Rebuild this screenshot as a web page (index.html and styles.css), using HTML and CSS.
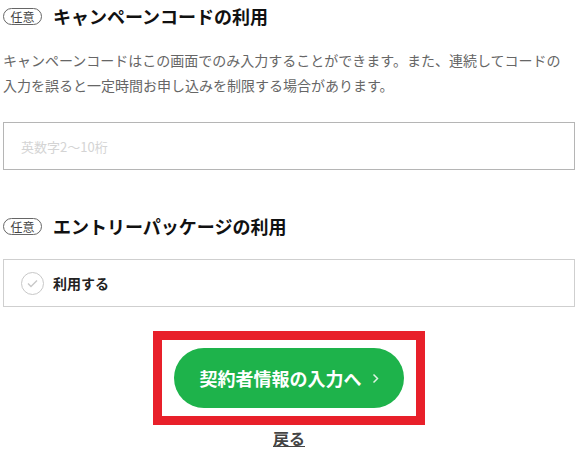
FILE: index.html
```html
<!DOCTYPE html>
<html lang="ja">

<head>
    <meta charset="UTF-8">
    <title>キャンペーンコードの利用</title>
    <meta name="viewport" content="width=device-width, initial-scale=1.0">
    <link rel="stylesheet" href="styles.css">
</head>

<body>

    <div class="section-head">
        <span class="badge">任意</span>
        <h2>キャンペーンコードの利用</h2>
    </div>

    <p class="note">キャンペーンコードはこの画面でのみ入力することができます。また、連続してコードの入力を誤ると一定時間お申し込みを制限する場合があります。</p>

    <input class="code-input" type="text" placeholder="英数字2〜10桁">

    <div class="section-head second">
        <span class="badge">任意</span>
        <h2>エントリーパッケージの利用</h2>
    </div>

    <label class="check-row">
        <span class="check-circle">
            <svg width="11" height="9" viewBox="0 0 11 9">
                <polyline points="1,4.5 4,7.5 10,1.5" fill="none" stroke="#c8c8c8" stroke-width="1.4" />
            </svg>
        </span>
        <span class="check-label">利用する</span>
    </label>

    <div class="actions">
        <div class="highlight">
            <button class="btn-next">契約者情報の入力へ
                <svg width="7" height="11" viewBox="0 0 7 11">
                    <polyline points="1.5,1.5 5.5,5.5 1.5,9.5" fill="none" stroke="#dff3e4" stroke-width="1.5" />
                </svg>
            </button>
        </div>
        <a class="back-link" href="#">戻る</a>
    </div>

</body>

</html>
```

FILE: styles.css
```css
body {
    margin: 0;
    padding: 0 5px 0 3px;
    font-family: "Noto Sans CJK JP", "Noto Sans", sans-serif;
    background: #fff;
    color: #111;
}

.section-head {
    display: flex;
    align-items: center;
    height: 32px;
}

.section-head.second {
    margin-top: 40px;
}

.badge {
    box-sizing: border-box;
    width: 39px;
    height: 17px;
    border: 1px solid #666;
    border-radius: 9px;
    font-size: 12px;
    line-height: 15px;
    text-align: center;
    color: #444;
    margin-right: 11px;
}

h2 {
    margin: 0;
    font-size: 18px;
    font-weight: bold;
    color: #111;
}

.note {
    margin: 16px 0 0;
    padding-right: 8px;
    font-size: 14px;
    line-height: 25px;
    color: #666;
}

.code-input {
    display: block;
    box-sizing: border-box;
    width: 100%;
    height: 48px;
    margin-top: 24px;
    padding: 0 17px;
    border: 1px solid #b5b5b5;
    font-family: inherit;
    font-size: 13px;
    outline: none;
}

.code-input::placeholder {
    color: #d4d4d4;
}

.check-row {
    display: flex;
    align-items: center;
    box-sizing: border-box;
    height: 48px;
    margin-top: 17px;
    padding-left: 17px;
    border: 1px solid #cfcfcf;
}

.check-circle {
    display: flex;
    align-items: center;
    justify-content: center;
    box-sizing: border-box;
    width: 23px;
    height: 23px;
    border: 1px solid #c8c8c8;
    border-radius: 50%;
    margin-right: 9px;
}

.check-label {
    font-size: 14px;
    font-weight: bold;
    color: #222;
}

.actions {
    display: flex;
    flex-direction: column;
    align-items: center;
    margin-top: 24px;
}

.highlight {
    box-sizing: border-box;
    width: 272px;
    padding: 8px 0;
    border: 9px solid #e8202a;
    display: flex;
    justify-content: center;
}

.btn-next {
    width: 230px;
    height: 60px;
    border: none;
    border-radius: 30px;
    background: #1eb34b;
    color: #fff;
    font-family: inherit;
    font-size: 18px;
    font-weight: bold;
    display: flex;
    align-items: center;
    justify-content: center;
    gap: 10px;
    cursor: pointer;
}

.back-link {
    margin-top: 3px;
    font-size: 16px;
    line-height: 20px;
    font-weight: bold;
    color: #444;
    text-decoration: underline;
}
```
